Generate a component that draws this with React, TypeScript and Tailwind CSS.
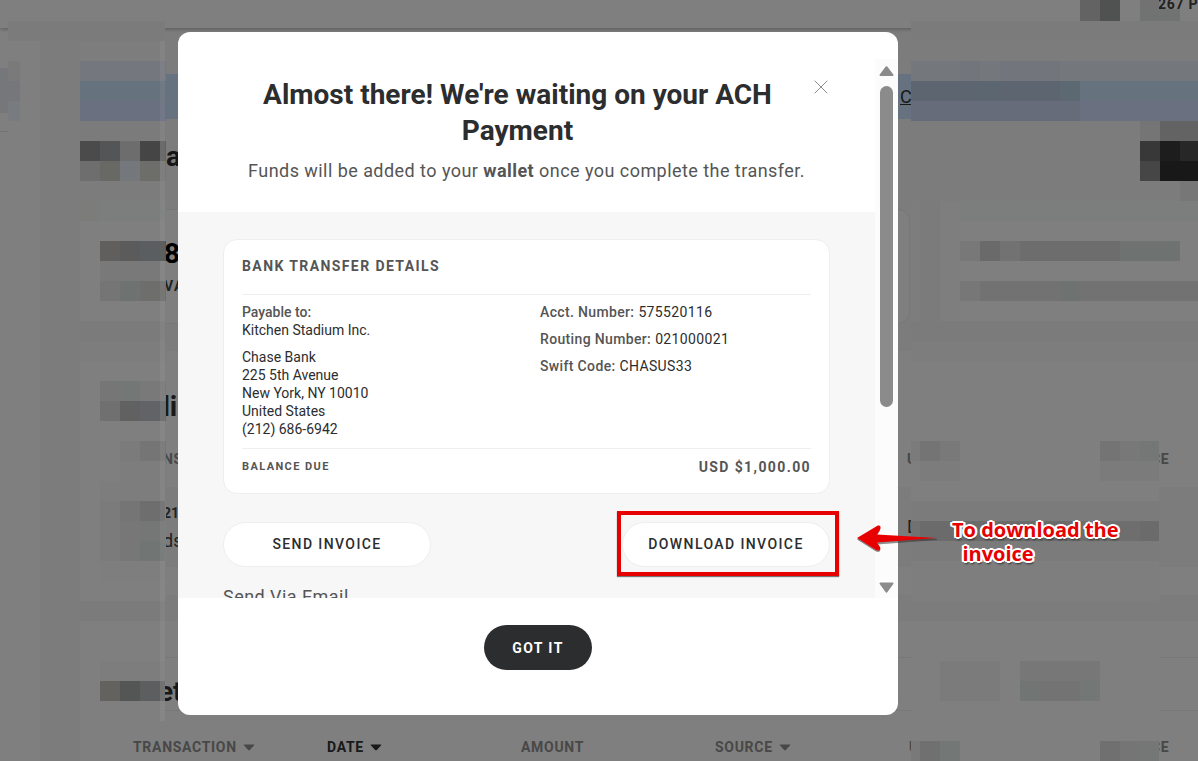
import type { ReactNode } from "react";
import { X } from "lucide-react";
import { clsx } from "clsx";

type Block = [x: number, y: number, w: number, h: number, fill: string];

const payee = ["Chase Bank", "225 5th Avenue", "New York, NY 10010", "United States", "(212) 686-6942"];

const account = [
  { label: "Acct. Number:", value: "575520116" },
  { label: "Routing Number:", value: "021000021" },
  { label: "Swift Code:", value: "CHASUS33" },
];

const columns = [
  { label: "TRANSACTION", sortable: true },
  { label: "DATE", sortable: true, active: true },
  { label: "AMOUNT" },
  { label: "SOURCE", sortable: true },
  { label: "U" },
  { label: "CE", inset: true },
];

// Pixelated patches that hide private data on the page behind the dialog
const leftBlocks: Block[] = [
  [8, 21, 157, 20, "#7b7b7b"],
  [8, 41, 32, 100, "#7f7f7f"],
  [0, 68, 8, 45, "#76777a"],
  [8, 61, 12, 20, "#7a7a7a"],
  [8, 81, 12, 20, "#76777b"],
  [8, 101, 12, 20, "#787b7f"],
  [80, 41, 80, 20, "#7d7d7d"],
  [80, 61, 86, 20, "#74787e"],
  [80, 81, 86, 20, "#66727e"],
  [80, 101, 86, 20, "#6a7080"],
  [80, 121, 86, 20, "#7b7b7b"],
  [80, 141, 20, 20, "#4b4b4b"],
  [100, 141, 20, 20, "#535557"],
  [120, 141, 20, 20, "#6d6d6d"],
  [140, 141, 20, 20, "#454545"],
  [160, 141, 6, 20, "#626262"],
  [80, 161, 20, 20, "#6e6e6e"],
  [100, 161, 20, 20, "#686864"],
  [120, 161, 20, 20, "#74777b"],
  [140, 161, 20, 20, "#6d6d6a"],
  [160, 161, 6, 20, "#767676"],
  [80, 201, 20, 20, "#7c7c7b"],
  [100, 201, 66, 20, "#7b7e7c"],
  [80, 221, 86, 100, "#7f7f7f"],
  [100, 241, 20, 20, "#615f5d"],
  [120, 241, 20, 20, "#5b5b5b"],
  [140, 241, 20, 20, "#5b5e61"],
  [160, 241, 6, 20, "#535556"],
  [100, 261, 60, 20, "#797979"],
  [100, 281, 20, 20, "#757575"],
  [120, 281, 20, 20, "#6e7270"],
  [140, 281, 26, 20, "#6e6e6d"],
  [80, 321, 86, 20, "#7b7b7b"],
  [80, 341, 86, 20, "#7d7d7d"],
  [80, 361, 86, 240, "#7f7f7f"],
  [100, 381, 20, 20, "#767676"],
  [120, 381, 20, 20, "#737776"],
  [140, 381, 26, 20, "#797979"],
  [100, 401, 20, 20, "#707070"],
  [120, 401, 20, 20, "#616161"],
  [140, 401, 20, 20, "#616366"],
  [160, 401, 6, 20, "#696a6b"],
  [120, 441, 20, 20, "#7b7b7b"],
  [140, 441, 26, 20, "#757575"],
  [120, 461, 46, 20, "#7d7d7d"],
  [100, 481, 66, 20, "#7d7d7d"],
  [100, 501, 20, 60, "#7b7b7b"],
  [120, 501, 20, 20, "#757575"],
  [140, 501, 25, 20, "#6e6e6e"],
  [120, 521, 20, 40, "#777777"],
  [140, 521, 25, 20, "#757777"],
  [140, 541, 25, 20, "#717574"],
  [100, 561, 65, 20, "#7e7e7e"],
  [80, 601, 85, 20, "#7b7b7b"],
  [80, 621, 85, 100, "#7f7f7f"],
  [100, 661, 65, 20, "#7d7d7d"],
  [100, 681, 20, 20, "#63625f"],
  [120, 681, 20, 20, "#545655"],
  [140, 681, 20, 20, "#5d5e60"],
  [160, 681, 5, 20, "#6a6a6a"],
];

const rightBlocks: Block[] = [
  [1080, 0, 20, 21, "#636363"],
  [1100, 0, 20, 21, "#4f5250"],
  [1140, 0, 19, 21, "#727272"],
  [1140, 9, 40, 12, "#707372"],
  [911, 21, 287, 20, "#7b7b7b"],
  [911, 41, 287, 20, "#7c7c7c"],
  [911, 61, 287, 20, "#74777b"],
  [960, 61, 20, 20, "#73757d"],
  [1000, 61, 60, 20, "#73757d"],
  [911, 81, 169, 20, "#5d6570"],
  [980, 81, 20, 20, "#5b6670"],
  [1060, 81, 20, 20, "#5c6872"],
  [1080, 81, 118, 20, "#66727e"],
  [911, 101, 169, 20, "#666c79"],
  [1080, 101, 118, 20, "#6a7080"],
  [911, 121, 287, 80, "#7c7c7c"],
  [1140, 121, 20, 20, "#757575"],
  [1160, 121, 38, 20, "#636363"],
  [1140, 141, 20, 20, "#383838"],
  [1160, 141, 20, 20, "#1d1d1d"],
  [1180, 141, 18, 20, "#272727"],
  [1140, 161, 20, 20, "#464646"],
  [1160, 161, 38, 20, "#181818"],
  [1180, 181, 18, 20, "#777777"],
  [911, 201, 9, 120, "#7d7d7d"],
  [920, 201, 20, 120, "#7b7b7b"],
  [940, 201, 20, 120, "#7e7e7e"],
  [960, 201, 238, 20, "#7b7e7c"],
  [960, 221, 238, 100, "#7f7f7f"],
  [960, 241, 20, 20, "#787878"],
  [980, 241, 20, 20, "#6a6a6a"],
  [1000, 241, 20, 20, "#727272"],
  [1020, 241, 100, 20, "#6d6d6d"],
  [1120, 241, 60, 20, "#6e7270"],
  [960, 281, 20, 20, "#777777"],
  [980, 281, 80, 20, "#727272"],
  [1060, 281, 20, 20, "#6e7270"],
  [1080, 281, 118, 20, "#727272"],
  [911, 321, 287, 20, "#7b7b7b"],
  [911, 341, 287, 20, "#7d7d7d"],
  [911, 361, 248, 140, "#7f7f7f"],
  [911, 441, 9, 20, "#7b7b7b"],
  [920, 441, 20, 20, "#747474"],
  [940, 441, 20, 20, "#797979"],
  [920, 461, 40, 20, "#7c7c7c"],
  [1100, 441, 20, 20, "#747474"],
  [1120, 441, 20, 20, "#787878"],
  [1140, 441, 19, 20, "#747776"],
  [1100, 461, 59, 20, "#7b7b7b"],
  [911, 501, 248, 20, "#7b7b7b"],
  [911, 521, 9, 20, "#717171"],
  [920, 521, 239, 20, "#6b6b6b"],
  [1080, 521, 60, 20, "#6e6e6e"],
  [911, 541, 248, 20, "#7b7b7b"],
  [911, 561, 248, 40, "#7e7e7e"],
  [911, 601, 248, 20, "#7c7c7c"],
  [911, 621, 248, 100, "#7f7f7f"],
  [940, 661, 60, 40, "#7b7b7b"],
  [1020, 661, 80, 20, "#777777"],
  [1020, 681, 20, 20, "#717574"],
  [1040, 681, 40, 20, "#737373"],
  [1080, 681, 20, 20, "#737776"],
  [911, 741, 9, 20, "#797979"],
  [920, 741, 20, 20, "#707070"],
  [940, 741, 20, 20, "#737776"],
  [1100, 741, 20, 20, "#707070"],
  [1120, 741, 20, 20, "#757575"],
  [1140, 741, 19, 20, "#747776"],
];

function Mosaic() {
  return (
    <svg className="pointer-events-none absolute left-0 top-0" width="1198" height="761" shapeRendering="crispEdges" aria-hidden="true">
      <rect x="40" y="41" width="40" height="697" fill="#7c7c7c" />
      {[...leftBlocks, ...rightBlocks].map(([x, y, w, h, fill], i) => (
        <rect key={i} x={x} y={y} width={w} height={h} fill={fill} />
      ))}
      <rect x="160" y="41" width="5" height="680" fill="#ffffff" opacity="0.06" />
    </svg>
  );
}

function SortCaret() {
  return (
    <svg width="12" height="7" viewBox="0 0 12 7" aria-hidden="true">
      <path d="M1.2 0.5h9.6c.5 0 .7.5.4.8L6.8 6c-.4.5-1.2.5-1.6 0L.8 1.3C.5 1 .7.5 1.2.5z" fill="currentColor" />
    </svg>
  );
}

function PagePanel({ children, className }: { children: ReactNode; className?: string }) {
  return <section className={clsx("bg-white", className)}>{children}</section>;
}

function WalletPage() {
  return (
    <div className="flex h-full flex-col bg-[#f9f9f9]" aria-hidden="true">
      <header className="relative flex h-7 shrink-0 justify-end bg-white shadow-[0_1px_4px_rgba(0,0,0,0.3)]">
        <span className="-mt-1 h-5 w-10 overflow-hidden whitespace-nowrap text-sm leading-4 font-bold tracking-wider text-[#444]">267 PT</span>
      </header>
      <div className="flex min-h-0 flex-1">
        <aside className="w-10 shrink-0 bg-white">
          <div className="h-[104px] w-2 border-b border-[#e4e4e4]" />
        </aside>
        <main className="min-w-0 flex-1 overflow-hidden pt-[46px] pl-10">
          <div className="flex h-[45px] items-center bg-[#cce5ff] pl-[820px] text-lg text-[#333] underline">C</div>
          <h1 className="pt-5 pb-[34px] pl-[86px] text-[28px] leading-9 font-bold text-[#2c2d2e]">a</h1>

          <div className="grid grid-cols-[830px_1fr] gap-[30px]">
            <div className="rounded-xl border border-[#eee] bg-white pt-[26px] pb-[27px] pl-[83px]">
              <p className="text-[28px] leading-9 font-bold text-black">8</p>
              <p className="mt-1 text-sm leading-5 font-bold tracking-widest text-[#444]">VA</p>
            </div>
            <div className="rounded-l-xl border border-[#eee] bg-white" />
          </div>

          <PagePanel className="mt-[27px] pt-[38px] pb-7">
            <h2 className="pl-[74px] text-[28px] leading-9 font-bold text-[#333]">di</h2>
            <div className="mt-6 grid grid-cols-[744px_244px_1fr] pl-[83px] text-sm leading-5 font-bold tracking-wider text-[#909090]">
              <span>NS</span>
              <span>U</span>
              <span>CE</span>
            </div>
            <div className="mt-[18px] grid h-20 grid-cols-[744px_1fr] items-center bg-[#f9f9f9] pl-[83px] text-[#444]">
              <div className="leading-7">
                <p className="text-sm leading-7 font-bold">212</p>
                <p className="text-lg leading-7">ds</p>
              </div>
              <span className="text-lg">D</span>
            </div>
          </PagePanel>

          <PagePanel className="mt-[26px] pt-9">
            <div className="border-y border-[#eee] pt-4">
              <h2 className="pl-[78px] text-[28px] leading-9 font-bold text-[#333]">et</h2>
            </div>
            <div className="mt-6 grid h-14 grid-cols-[repeat(6,194px)] pl-[53px]">
              {columns.map((col) => (
                <span
                  key={col.label}
                  className={clsx(
                    "flex h-6 items-center gap-1.5 text-sm font-bold tracking-wider",
                    col.active ? "text-[#333]" : "text-[#909090]",
                    col.inset && "pl-12",
                  )}
                >
                  {col.label}
                  {col.sortable && <SortCaret />}
                </span>
              ))}
            </div>
          </PagePanel>
        </main>
      </div>
    </div>
  );
}

function Scrollbar() {
  return (
    <div className="flex w-[23px] shrink-0 flex-col items-center bg-[#fcfcfc] pt-[7px] pb-1" aria-hidden="true">
      <svg width="15" height="10" viewBox="0 0 15 10">
        <path d="M7.5 1.2 13.5 9H1.5z" fill="#8b8b8b" stroke="#8b8b8b" strokeWidth="2" strokeLinejoin="round" />
      </svg>
      <div className="mt-2.5 h-[321px] w-[13px] rounded-full bg-[#8b8b8b]" />
      <svg className="mt-auto" width="15" height="12" viewBox="0 0 15 12">
        <path d="M1.500 1.500h12L7.500 9.700z" fill="#8b8b8b" stroke="#8b8b8b" strokeWidth="2" strokeLinejoin="round" />
      </svg>
    </div>
  );
}

function OutlineButton({ children }: { children: ReactNode }) {
  return (
    <button
      type="button"
      className="h-[45px] w-52 rounded-full border border-[#eee] bg-white pb-0.5 text-sm font-medium tracking-widest text-[#2c2d2e]"
    >
      {children}
    </button>
  );
}

function TransferCard() {
  return (
    <div className="rounded-[14px] border border-[#eee] bg-white px-[18px] pt-4 pb-[17px] text-sm leading-[18px] text-[#2c2d2e]">
      <h3 className="border-b border-[#eee] pt-px pb-[19px] font-bold tracking-widest text-[#555]">BANK TRANSFER DETAILS</h3>
      <div className="grid grid-cols-2 gap-[27px] border-b border-[#eee] pt-2 pb-[10px]">
        <div>
          <p className="font-medium text-[#555]">Payable to:</p>
          <p>Kitchen Stadium Inc.</p>
          <address className="mt-[9px] not-italic">
            {payee.map((line) => (
              <p key={line}>{line}</p>
            ))}
          </address>
        </div>
        <dl className="flex flex-col gap-[9px] tracking-wide">
          {account.map((row) => (
            <div key={row.label} className="flex gap-1">
              <dt className="font-medium text-[#555]">{row.label}</dt>
              <dd>{row.value}</dd>
            </div>
          ))}
        </dl>
      </div>
      <div className="flex items-center justify-between pt-[9px] font-bold tracking-widest text-[#555]">
        <span className="text-[11px]">BALANCE DUE</span>
        <span>USD $1,000.00</span>
      </div>
    </div>
  );
}

function Annotation() {
  return (
    <div className="pointer-events-none absolute top-[486px] left-[678px] flex items-start gap-3.5">
      <svg width="82" height="36" viewBox="0 0 82 36" className="shrink-0">
        <path d="M1 21.500 21 9.500c3-1 4 1 3 3l-3 5 60 3.500v1L21 26.500l3 4c1 3-1 4-4 3z" fill="#333" opacity="0.55" />
        <path d="M1 20 21 8c3-1.500 4.500 1 3 3.500l-3 5 60 3.500-60 4.500 3 4.500c1.500 3-1 4.500-4 3z" fill="#e80000" />
      </svg>
      <p className="font-['Open_Sans','Noto_Sans',sans-serif] text-xl leading-6 font-bold whitespace-pre text-[#e60000] [text-shadow:2px_0_#fff,-2px_0_#fff,0_2px_#fff,0_-2px_#fff,1px_1px_#fff,-1px_1px_#fff,1px_-1px_#fff,-1px_-1px_#fff,2px_1px_#fff,-2px_1px_#fff,2px_-1px_#fff,-2px_-1px_#fff,1px_3px_2px_#333]">
        {"To download the\n  invoice"}
      </p>
    </div>
  );
}

function InvoiceDialog() {
  return (
    <div role="dialog" aria-labelledby="dialog-title" className="relative mt-8 ml-[178px] w-full max-w-[720px] self-start rounded-xl bg-white pt-[27px]">
      <div className="flex h-[539px]">
        <div className="min-w-0 flex-1 overflow-hidden">
          <div className="px-[45px] pt-[18px] pb-[29px] text-center">
            <div className="flex items-start">
              <h2 id="dialog-title" className="flex-1 text-[28px] leading-9 font-bold text-[#2c2d2e]">
                Almost there! We're waiting on your ACH Payment
              </h2>
              <button type="button" aria-label="Close" className="flex h-5 w-[18px] shrink-0 items-center justify-center text-[#8b8b8b]">
                <X className="h-6 w-6 shrink-0" strokeWidth={1} />
              </button>
            </div>
            <p className="mt-2.5 text-lg leading-6 tracking-wide whitespace-nowrap text-[#555]">
              Funds will be added to your <strong className="font-bold">wallet</strong> once you complete the transfer.
            </p>
          </div>
          <div className="bg-[#f7f7f7] px-[45px] pt-[27px] pb-6">
            <TransferCard />
            <div className="mt-7 flex justify-between">
              <OutlineButton>SEND INVOICE</OutlineButton>
              <div className="relative">
                <OutlineButton>DOWNLOAD INVOICE</OutlineButton>
                <div className="pointer-events-none absolute -top-[11px] -right-[9px] -bottom-[9px] -left-[5px] border-4 border-[#e60000] shadow-[0_1px_1px_#777]" />
              </div>
            </div>
            <p className="mt-[18px] text-lg leading-6 tracking-wide text-[#555]">Send Via Email</p>
          </div>
        </div>
        <Scrollbar />
      </div>
      <footer className="flex justify-center pt-[27px] pb-[45px]">
        <button type="button" className="h-[45px] rounded-full bg-[#2c2d2e] px-7 text-sm font-bold tracking-widest text-white">
          GOT IT
        </button>
      </footer>
      <Annotation />
    </div>
  );
}

export default function App() {
  return (
    <div className="relative h-screen overflow-hidden font-[Roboto,'Open_Sans',sans-serif]">
      <WalletPage />
      <div className="absolute inset-0 bg-black/50" />
      <Mosaic />
      <div className="absolute inset-0 flex">
        <InvoiceDialog />
      </div>
    </div>
  );
}
